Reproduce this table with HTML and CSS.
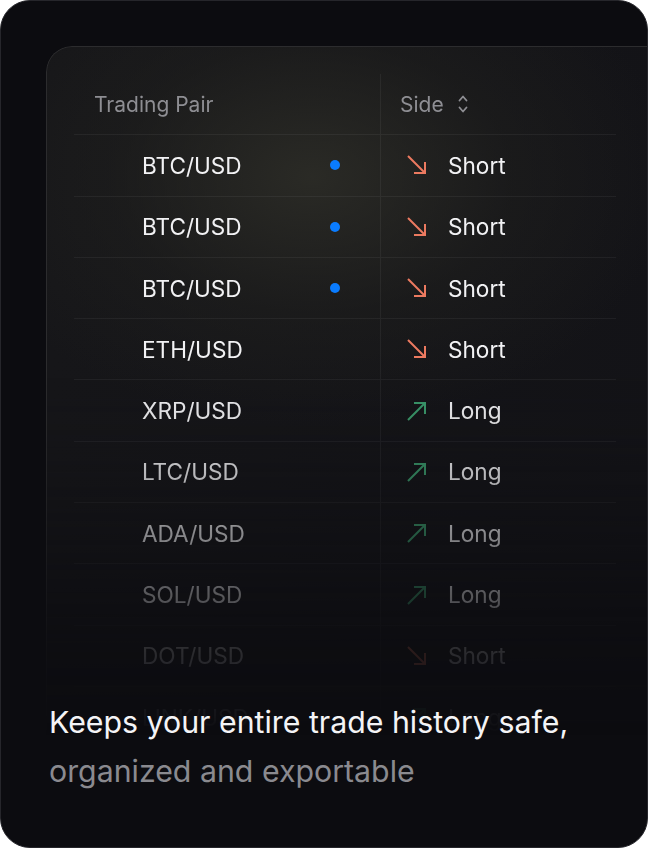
FILE: index.html
```html
<!DOCTYPE html>
<html>
<head>
<meta charset="utf-8">
<link rel="stylesheet" href="styles.css">
</head>
<body>
<div class="card">
  <div class="panel">
    <div class="table">
      <div class="row head">
        <div class="c1"><span class="hlabel">Trading Pair</span></div>
        <div class="c2"><span class="hlabel">Side</span>
          <svg class="sort" viewBox="0 0 10 22" width="10" height="22"><path d="M1.5 7.5 L5 3.5 L8.5 7.5 M1.5 14.5 L5 18.5 L8.5 14.5" fill="none" stroke="#8e8e93" stroke-width="1.8" stroke-linecap="round" stroke-linejoin="round"/></svg>
        </div>
      </div>
      <div class="row"><div class="c1 pair"><span>BTC/USD</span><i class="dot"></i></div><div class="c2"><svg class="arr" viewBox="0 0 24 24"><path d="M3 3 L20 20 M20 9 V20 H9" class="short"/></svg><span>Short</span></div></div>
      <div class="row"><div class="c1 pair"><span>BTC/USD</span><i class="dot"></i></div><div class="c2"><svg class="arr" viewBox="0 0 24 24"><path d="M3 3 L20 20 M20 9 V20 H9" class="short"/></svg><span>Short</span></div></div>
      <div class="row"><div class="c1 pair"><span>BTC/USD</span><i class="dot"></i></div><div class="c2"><svg class="arr" viewBox="0 0 24 24"><path d="M3 3 L20 20 M20 9 V20 H9" class="short"/></svg><span>Short</span></div></div>
      <div class="row"><div class="c1 pair"><span>ETH/USD</span></div><div class="c2"><svg class="arr" viewBox="0 0 24 24"><path d="M3 3 L20 20 M20 9 V20 H9" class="short"/></svg><span>Short</span></div></div>
      <div class="row"><div class="c1 pair"><span>XRP/USD</span></div><div class="c2"><svg class="arr" viewBox="0 0 24 24"><path d="M3 21 L20 4 M9 4 H20 V15" class="long"/></svg><span>Long</span></div></div>
      <div class="row"><div class="c1 pair"><span>LTC/USD</span></div><div class="c2"><svg class="arr" viewBox="0 0 24 24"><path d="M3 21 L20 4 M9 4 H20 V15" class="long"/></svg><span>Long</span></div></div>
      <div class="row"><div class="c1 pair"><span>ADA/USD</span></div><div class="c2"><svg class="arr" viewBox="0 0 24 24"><path d="M3 21 L20 4 M9 4 H20 V15" class="long"/></svg><span>Long</span></div></div>
      <div class="row"><div class="c1 pair"><span>SOL/USD</span></div><div class="c2"><svg class="arr" viewBox="0 0 24 24"><path d="M3 21 L20 4 M9 4 H20 V15" class="long"/></svg><span>Long</span></div></div>
      <div class="row"><div class="c1 pair"><span>DOT/USD</span></div><div class="c2"><svg class="arr" viewBox="0 0 24 24"><path d="M3 3 L20 20 M20 9 V20 H9" class="short"/></svg><span>Short</span></div></div>
      <div class="row"><div class="c1 pair"><span>LINK/USD</span></div><div class="c2"><svg class="arr" viewBox="0 0 24 24"><path d="M3 21 L20 4 M9 4 H20 V15" class="long"/></svg><span>Long</span></div></div>
    </div>
  </div>
  <div class="caption">
    <p class="l1">Keeps your entire trade history safe,</p>
    <p class="l2">organized and exportable</p>
  </div>
</div>
</body>
</html>
```
FILE: styles.css
```css
* { box-sizing: border-box; }
html, body { margin: 0; padding: 0; background: #ffffff; }
body { font-family: Inter, "Noto Sans", sans-serif; }
.card {
  position: relative;
  width: 648px;
  height: 848px;
  border-radius: 30px;
  background: #0c0c10;
  border: 1.5px solid #26262b;
  overflow: hidden;
}
.panel {
  margin: 45px 0 0 45px;
  width: 640px;
  height: 760px;
  border: 1.5px solid #2c2c2e;
  border-right: none;
  border-radius: 26px 0 0 0;
  background:
    radial-gradient(ellipse 360px 250px at 265px 130px, rgba(46,46,40,0.85), rgba(34,34,31,0.45) 55%, rgba(20,20,24,0) 100%),
    linear-gradient(90deg, #161619, #131317);
  padding: 27px 0 0 27px;
  -webkit-mask-image: linear-gradient(to bottom, #000 0, #000 320px, rgba(0,0,0,0.88) 390px, rgba(0,0,0,0.5) 500px, rgba(0,0,0,0.15) 600px, rgba(0,0,0,0) 690px);
  mask-image: linear-gradient(to bottom, #000 0, #000 320px, rgba(0,0,0,0.88) 390px, rgba(0,0,0,0.5) 500px, rgba(0,0,0,0.15) 600px, rgba(0,0,0,0) 690px);
}
.table { width: 542px; }
.row {
  display: grid;
  grid-template-columns: 306px 236px;
  height: 61.3px;
  border-bottom: 1px solid rgba(255,255,255,0.055);
  font-size: 22.6px;
  color: #f2f2f4;
}
.row > div { display: flex; align-items: center; }
.c2 { border-left: 1px solid rgba(255,255,255,0.055); }
.head { color: #8e8e93; font-size: 21px; }
.head .c1 { padding-left: 20px; }
.head .c2 { padding-left: 19px; gap: 14px; }
.sort { display: block; }
.pair { padding-left: 68px; }
.pair span { flex: 1; }
.dot {
  width: 10px; height: 10px; border-radius: 50%;
  background: #0a7cff;
  margin-right: 40px;
}
.row .c2:not(.head .c2) { padding-left: 24px; }
.arr { width: 24px; height: 24px; margin-right: 19px; display: block; }
.arr path { fill: none; stroke-width: 2; stroke-linecap: butt; stroke-linejoin: miter; }
.arr .short { stroke: #ec7a60; }
.arr .long { stroke: #3b9a6c; }
.caption {
  position: absolute;
  left: 48px;
  top: 697px;
  font-size: 30.3px;
  line-height: 49px;
  letter-spacing: 0;
}
.caption p { margin: 0; }
.l1 { color: #f4f4f6; }
.l2 { color: #8a8a8f; }
```
